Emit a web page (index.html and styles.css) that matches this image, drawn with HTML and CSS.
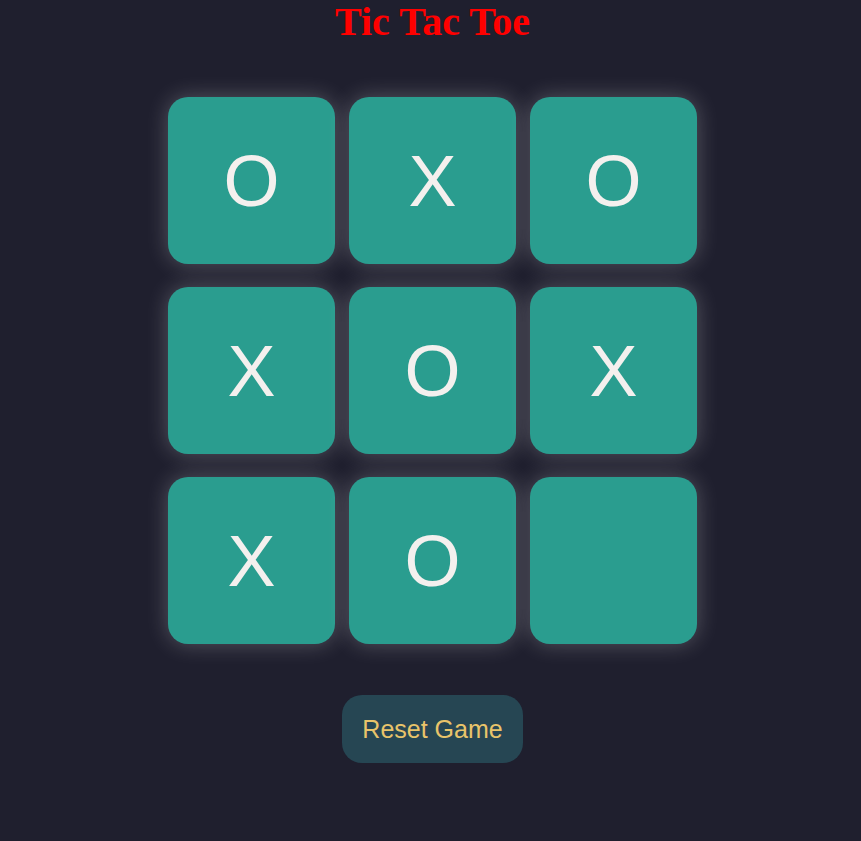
FILE: index.html
```html
<!DOCTYPE html>
<html lang="en">
<head>
<meta charset="utf-8">
<title>Tic Tac Toe</title>
<link rel="stylesheet" href="styles.css">
</head>
<body>
<main class="app">
  <h1 class="title">Tic Tac Toe</h1>
  <div class="board">
    <button class="cell">O</button>
    <button class="cell">X</button>
    <button class="cell">O</button>
    <button class="cell">X</button>
    <button class="cell">O</button>
    <button class="cell">X</button>
    <button class="cell">X</button>
    <button class="cell">O</button>
    <button class="cell"></button>
  </div>
  <button class="reset">Reset Game</button>
</main>
</body>
</html>
```
FILE: styles.css
```css
html, body {
  margin: 0;
  padding: 0;
  background: #1f1f2e;
  height: 100%;
}
.app {
  display: flex;
  flex-direction: column;
  align-items: center;
  padding-left: 4px;
}
.title {
  margin: 0;
  font-family: "Liberation Serif", "Times New Roman", serif;
  font-weight: bold;
  font-size: 40px;
  color: #ff0000;
  line-height: 44px;
}
.board {
  margin-top: 53px;
  display: grid;
  grid-template-columns: repeat(3, 167px);
  grid-auto-rows: 167px;
  column-gap: 14px;
  row-gap: 23px;
}
.cell {
  border: none;
  border-radius: 20px;
  background: #2a9d8f;
  color: #f4f0ee;
  font-family: "Liberation Sans", Arial, sans-serif;
  font-size: 72px;
  padding: 0;
  display: flex;
  align-items: center;
  justify-content: center;
  box-shadow: 0 0 22px rgba(255, 255, 255, 0.25);
}
.reset {
  margin-top: 51px;
  border: none;
  border-radius: 20px;
  background: #264653;
  color: #e9c46a;
  font-family: "Liberation Sans", Arial, sans-serif;
  font-size: 25px;
  padding: 0 20px;
  height: 68px;
}
```
